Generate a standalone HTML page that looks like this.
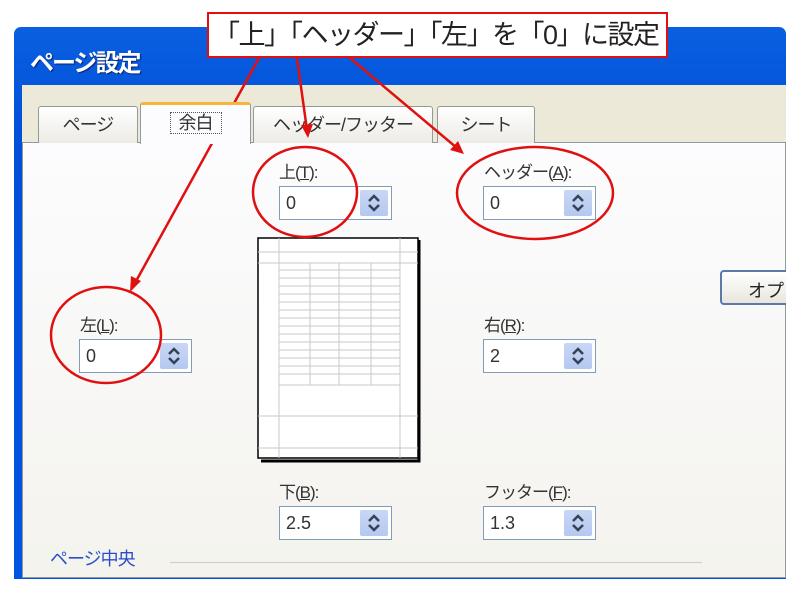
<!DOCTYPE html>
<html><head><meta charset="utf-8"><style>
*{margin:0;padding:0;box-sizing:border-box}
body{width:800px;height:590px;background:#fff;position:relative;overflow:hidden;font-family:"Liberation Sans","Noto Sans CJK JP",sans-serif;color:#222}
.win{position:absolute;left:14px;top:27px;width:772px;height:552px;background:linear-gradient(#0a5fe0,#0050d8 20%,#0054e3);border-radius:7px 7px 0 0}
.title{position:absolute;left:30px;top:43px;font-size:24px;font-weight:bold;color:#fff;text-shadow:1px 1px 1px #0a246a;letter-spacing:-2px}
.body{position:absolute;left:22px;top:85px;width:764px;height:492px;background:#ece9d8}
.panel{position:absolute;left:22px;top:142px;width:764px;height:436px;background:linear-gradient(#fcfcfe,#f4f3ee);border:1px solid #919b9c}
.tab{position:absolute;top:106px;height:37px;background:linear-gradient(#fff,#ecebe5);border:1px solid #919b9c;border-bottom:none;border-radius:3px 3px 0 0;font-size:18px;text-align:center;line-height:36px;color:#333;letter-spacing:-1px}
.tab.sel{top:102px;height:42px;background:#fcfcfe;border-top:3px solid #f8b438;z-index:2}
.lbl{position:absolute;font-size:17px;color:#333;letter-spacing:-1px}
.inp{position:absolute;width:113px;height:34px;background:#fff;border:1px solid #7f9db9;font-size:18px;padding:6px 0 0 6px;color:#333}
.spin{position:absolute;right:3px;top:3px;width:28px;height:26px;background:linear-gradient(#c9d7f5,#b4c8f0);border-radius:2px}
.spin svg{position:absolute;left:7px;top:4px}
.sec{position:absolute;left:50px;top:545px;font-size:18px;color:#2a4ec8;letter-spacing:-1px}
</style></head><body>
<div class="win"></div>
<div class="title">ページ設定</div>
<div class="body"></div>
<div class="panel"></div>
<div class="tab" style="left:38px;width:100px">ページ</div>
<div class="tab sel" style="left:140px;width:111px"><span style="border:1px dotted #555;padding:0 8px">余白</span></div>
<div class="tab" style="left:253px;width:180px">ヘッダー/フッター</div>
<div class="tab" style="left:437px;width:98px">シート</div>

<div class="lbl" style="left:279px;top:158px">上(<u>T</u>):</div>
<div class="inp" style="left:279px;top:186px">0<div class="spin"><svg width="14" height="18"><path d="M2 7L7 2L12 7M2 11L7 16L12 11" stroke="#345" stroke-width="2.5" fill="none"/></svg></div></div>
<div class="lbl" style="left:484px;top:158px">ヘッダー(<u>A</u>):</div>
<div class="inp" style="left:483px;top:186px">0<div class="spin"><svg width="14" height="18"><path d="M2 7L7 2L12 7M2 11L7 16L12 11" stroke="#345" stroke-width="2.5" fill="none"/></svg></div></div>
<div class="lbl" style="left:80px;top:311px">左(<u>L</u>):</div>
<div class="inp" style="left:79px;top:339px">0<div class="spin"><svg width="14" height="18"><path d="M2 7L7 2L12 7M2 11L7 16L12 11" stroke="#345" stroke-width="2.5" fill="none"/></svg></div></div>
<div class="lbl" style="left:484px;top:311px">右(<u>R</u>):</div>
<div class="inp" style="left:483px;top:339px">2<div class="spin"><svg width="14" height="18"><path d="M2 7L7 2L12 7M2 11L7 16L12 11" stroke="#345" stroke-width="2.5" fill="none"/></svg></div></div>
<div class="lbl" style="left:279px;top:478px">下(<u>B</u>):</div>
<div class="inp" style="left:279px;top:506px">2.5<div class="spin"><svg width="14" height="18"><path d="M2 7L7 2L12 7M2 11L7 16L12 11" stroke="#345" stroke-width="2.5" fill="none"/></svg></div></div>
<div class="lbl" style="left:484px;top:478px">フッター(<u>F</u>):</div>
<div class="inp" style="left:483px;top:506px">1.3<div class="spin"><svg width="14" height="18"><path d="M2 7L7 2L12 7M2 11L7 16L12 11" stroke="#345" stroke-width="2.5" fill="none"/></svg></div></div>

<div style="position:absolute;left:720px;top:270px;width:72px;height:35px;border:2px solid #5a7aa8;border-radius:4px;background:linear-gradient(#fff,#e8e6dc);font-size:18px;padding:5px 0 0 26px">オプ</div>
<div style="position:absolute;left:786px;top:20px;width:14px;height:570px;background:#fff"></div>

<div class="sec">ページ中央</div>
<div style="position:absolute;left:170px;top:562px;width:532px;height:1px;background:#cfcdc4"></div>

<svg style="position:absolute;left:0;top:0" width="800" height="590">
<rect x="258" y="238" width="160" height="220" fill="#fff" stroke="#000" stroke-width="1.5"/>
<path d="M419 240V461H261" stroke="#000" stroke-width="3" fill="none"/>
<g stroke="#c8c8c8" stroke-width="1" fill="none">
<path d="M279 238V458M400 238V458M258 252H418M258 263H418M258 416H418M258 448H418"/>
<path d="M310 263V385M339 263V385M371 263V385"/>
<path d="M279 270H400M279 278H400M279 286H400M279 294H400M279 302H400M279 310H400M279 318H400M279 326H400M279 334H400M279 342H400M279 350H400M279 358H400M279 366H400M279 374H400M279 385H400"/>
</g>
<g stroke="#e01010" stroke-width="2.5" fill="none">
<ellipse cx="305" cy="192" rx="52" ry="45"/>
<ellipse cx="535" cy="193" rx="78" ry="46"/>
<ellipse cx="106" cy="335" rx="55" ry="48"/>
<path d="M259 58L135 283M297 58L307 130M350 58L457 148"/>
</g>
<g fill="#e01010">
<path d="M130 292L131 276L141 281Z"/>
<path d="M308 138L301 125L313 124Z"/>
<path d="M464 154L450 150L458 141Z"/>
</g>
</svg>
<div style="position:absolute;left:207px;top:12px;width:461px;height:46px;background:#fff;border:2px solid #e01010;font-size:27px;line-height:42px;padding-left:4px;color:#222;white-space:nowrap;letter-spacing:-1.5px;overflow:hidden">「上」「ヘッダー」「左」を「0」に設定</div>
</body></html>
